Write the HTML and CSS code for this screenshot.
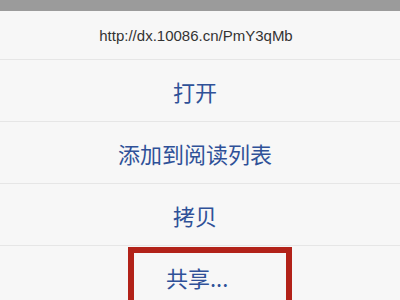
FILE: index.html
```html
<!DOCTYPE html>
<html>
<head>
<meta charset="utf-8">
<link rel="stylesheet" href="styles.css">
</head>
<body>
<div class="topbar"></div>
<div class="sheet">
  <div class="row url">http://dx.10086.cn/PmY3qMb</div>
  <div class="row action">打开</div>
  <div class="row action">添加到阅读列表</div>
  <div class="row action">拷贝</div>
  <div class="row action share">共享...
    <div class="highlight"></div>
  </div>
</div>
</body>
</html>
```

FILE: styles.css
```css
html, body {
  margin: 0;
  padding: 0;
  width: 400px;
  height: 300px;
  overflow: hidden;
  background: #f7f7f7;
}
.topbar {
  height: 11px;
  background: #9b9b9b;
}
.sheet {
  display: flex;
  flex-direction: column;
}
.row {
  display: flex;
  align-items: center;
  justify-content: center;
  border-bottom: 1px solid #e6e6e6;
  background: #f7f7f7;
}
.url {
  height: 48px;
  font-family: "Liberation Sans", Arial, sans-serif;
  font-size: 15px;
  color: #333333;
  padding-right: 8px;
}
.action {
  height: 61px;
  font-family: "Noto Sans CJK SC", sans-serif;
  font-size: 22px;
  color: #2f5198;
  padding-right: 10px;
}
.share {
  position: relative;
  justify-content: flex-start;
  padding-left: 166px;
  padding-right: 0;
}
.highlight {
  position: absolute;
  left: 128px;
  top: 1px;
  width: 152px;
  height: 70px;
  border: 6px solid #b22219;
}
```
